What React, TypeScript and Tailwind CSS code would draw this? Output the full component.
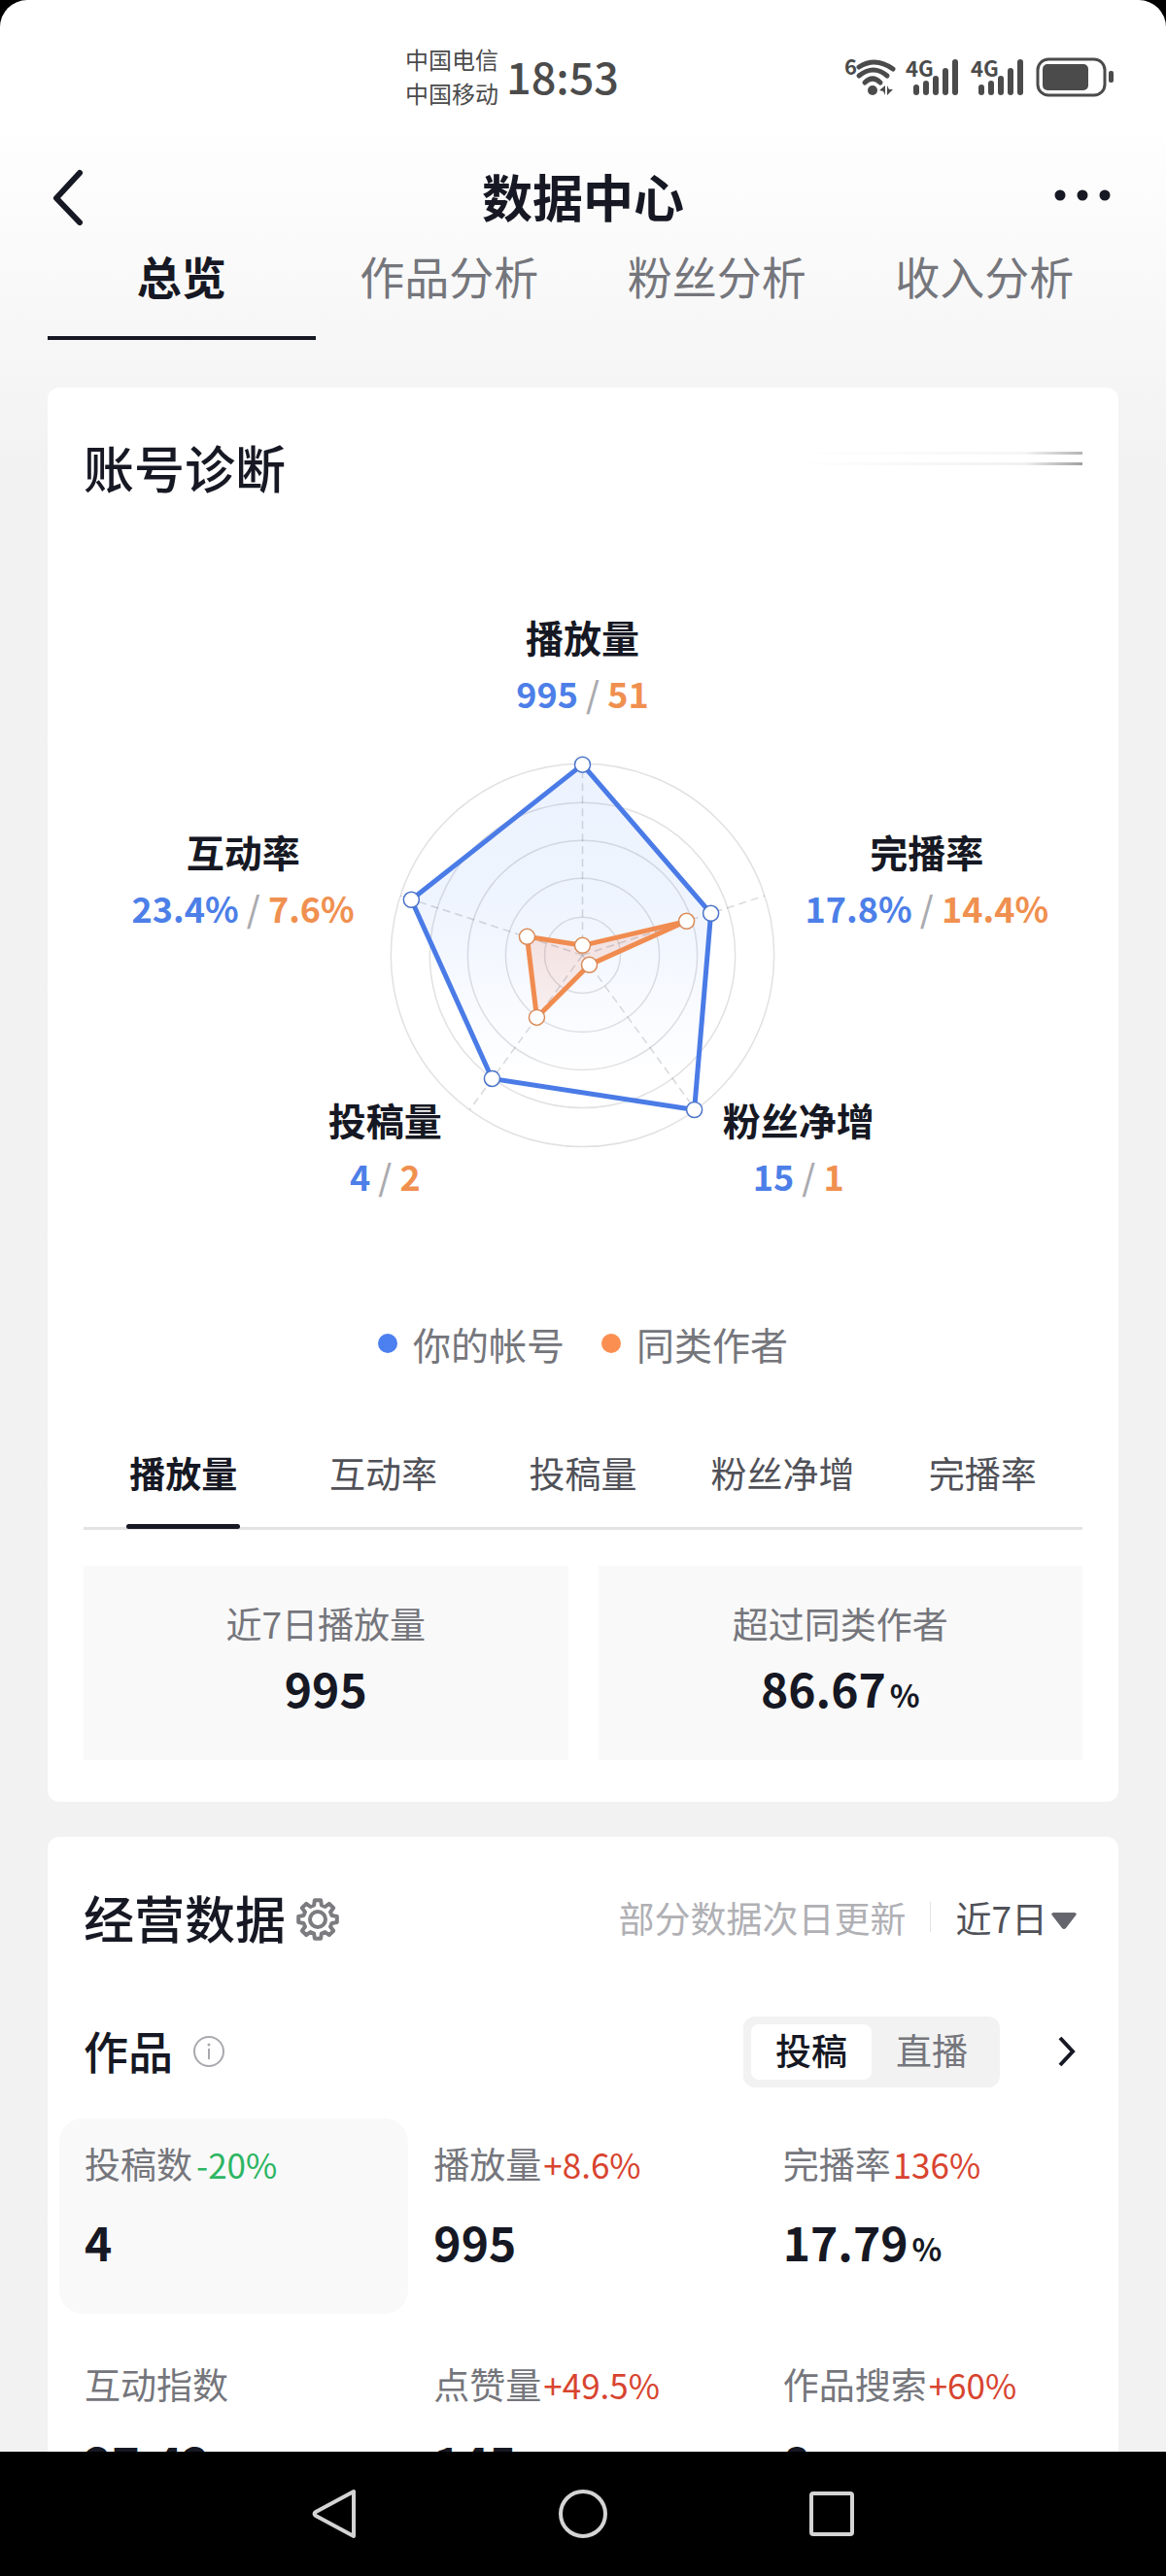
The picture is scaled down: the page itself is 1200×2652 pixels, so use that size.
import { useState } from "react";

const overviewTabs = ["总览", "作品分析", "粉丝分析", "收入分析"];
const metricTabs = ["播放量", "互动率", "投稿量", "粉丝净增", "完播率"];

interface Metric {
  label: string;
  change?: string;
  down?: boolean;
  value: string;
  unit?: string;
}

const metrics: Metric[] = [
  { label: "投稿数", change: "-20%", down: true, value: "4" },
  { label: "播放量", change: "+8.6%", value: "995" },
  { label: "完播率", change: "136%", value: "17.79", unit: "%" },
  { label: "互动指数", value: "27.42" },
  { label: "点赞量", change: "+49.5%", value: "145" },
  { label: "作品搜索", change: "+60%", value: "8" },
];

const radarLabels = [
  { x: 600, y: 672, name: "播放量", mine: "995", peer: "51" },
  { x: 954, y: 893, name: "完播率", mine: "17.8%", peer: "14.4%" },
  { x: 822, y: 1168, name: "粉丝净增", mine: "15", peer: "1" },
  { x: 397, y: 1168, name: "投稿量", mine: "4", peer: "2" },
  { x: 251, y: 893, name: "互动率", mine: "23.4%", peer: "7.6%" },
];

const rings = [39, 79, 118, 157, 197];
const axes = [
  [600, 786],
  [787, 922],
  [716, 1142],
  [484, 1142],
  [413, 922],
];
const minePoints = [
  [600, 787],
  [732, 940],
  [715, 1142],
  [507, 1110],
  [424, 926],
];
const peerPoints = [
  [600, 973],
  [707, 948],
  [607, 993],
  [553, 1047],
  [543, 964],
];

// eight teeth, each made of two outer and two inner corners
const gearPoints = Array.from({ length: 8 }, (_, i) => i * 45).flatMap((a) =>
  [
    [a - 9, 20],
    [a + 9, 20],
    [a + 15, 15],
    [a + 30, 15],
  ].map(([deg, r]) => {
    const t = (deg * Math.PI) / 180;
    return [Math.round((23 + r * Math.sin(t)) * 10) / 10, Math.round((23 - r * Math.cos(t)) * 10) / 10];
  })
);

function StatusBar() {
  return (
    <div className="grid h-[156px] grid-cols-[1fr_auto_1fr] items-center text-[#4b4b4b]">
      <div />
      <div className="flex items-center gap-2 pr-[146px]">
        <div className="text-[24px] leading-[35px]">
          <div>中国电信</div>
          <div>中国移动</div>
        </div>
        <div className="text-[45px] leading-[48px] font-medium">18:53</div>
      </div>
      <div className="flex items-center justify-end pr-[54px]">
        <svg width="278" height="60" viewBox="868 48 278 60" fill="currentColor">
          <text x="869" y="77" fontSize="22" fontWeight="700">6</text>
          <g fill="none" stroke="currentColor" strokeWidth="5" strokeLinecap="round">
            <path d="M884 69 Q901 58 919 71" />
            <path d="M884 78 Q899 66 913 78" />
            <path d="M890 85 Q898 77 906 85" />
          </g>
          <circle cx="898" cy="93" r="5" />
          <path d="M905 93l6-5v10l-2-4zM913 88v10l6-6h-4z" />
          <Signal x={0} />
          <Signal x={67} />
          <rect x="1068" y="61" width="69" height="37" rx="11" fill="none" stroke="currentColor" strokeWidth="3" />
          <rect x="1073" y="66" width="47" height="27" rx="5" />
          <rect x="1141" y="73" width="5" height="12" rx="2" />
        </svg>
      </div>
    </div>
  );
}

function Signal({ x }: { x: number }) {
  return (
    <g transform={`translate(${x} 0)`}>
      <text x="932" y="79" fontSize="22" fontWeight="700">4G</text>
      <rect x="940" y="87" width="6" height="11" rx="3" />
      <rect x="950" y="83" width="6" height="15" rx="3" />
      <rect x="960" y="78" width="6" height="20" rx="3" />
      <rect x="970" y="70" width="6" height="28" rx="3" />
      <rect x="980" y="61" width="6" height="37" rx="3" />
    </g>
  );
}

function Radar() {
  return (
    <svg viewBox="87 620 1027 640" className="w-full" role="img" aria-label="账号诊断">
      <defs>
        <linearGradient id="mine" x1="0" y1="0" x2="0" y2="1">
          <stop offset="0" stopColor="#4a86f5" stopOpacity="0.1" />
          <stop offset="0.4" stopColor="#4a86f5" stopOpacity="0.09" />
          <stop offset="0.9" stopColor="#4a86f5" stopOpacity="0" />
        </linearGradient>
        <linearGradient id="peer" x1="0" y1="0" x2="0" y2="1">
          <stop offset="0" stopColor="#f5734a" stopOpacity="0.18" />
          <stop offset="1" stopColor="#f5734a" stopOpacity="0.08" />
        </linearGradient>
      </defs>
      <polygon points={minePoints.join(" ")} fill="url(#mine)" />
      <polygon points={peerPoints.join(" ")} fill="url(#peer)" />
      {rings.map((r) => (
        <circle key={r} cx="600" cy="983" r={r} fill="none" stroke="#161823" strokeOpacity="0.13" strokeWidth="1.5" />
      ))}
      {axes.map(([x, y]) => (
        <line key={x} x1="600" y1="983" x2={x} y2={y} stroke="#161823" strokeOpacity="0.16" strokeWidth="1.5" strokeDasharray="8 5" />
      ))}
      <polygon points={minePoints.join(" ")} fill="none" stroke="#4a7be6" strokeWidth="5" strokeLinejoin="round" />
      {minePoints.map(([x, y]) => (
        <circle key={x} cx={x} cy={y} r="8" fill="#fff" stroke="#4a74c8" strokeWidth="1.5" />
      ))}
      <polygon points={peerPoints.join(" ")} fill="none" stroke="#f08c50" strokeWidth="5" strokeLinejoin="round" />
      {peerPoints.map(([x, y]) => (
        <circle key={x} cx={x} cy={y} r="8" fill="#fff" stroke="#d98a58" strokeWidth="1.5" />
      ))}
      {radarLabels.map((l) => (
        <g key={l.name} textAnchor="middle">
          <text x={l.x} y={l.y} fontSize="39" fontWeight="700" fill="#161823">{l.name}</text>
          <text x={l.x} y={l.y + 57} fontSize="36" fontWeight="700">
            <tspan fill="#4d7fe8">{l.mine}</tspan>
            <tspan fill="#aaaaaf" fontWeight="500"> / </tspan>
            <tspan fill="#f09050">{l.peer}</tspan>
          </text>
        </g>
      ))}
    </svg>
  );
}

function Diagnosis() {
  const [tab, setTab] = useState("播放量");
  return (
    <section className="rounded-xl bg-white px-[37px] pt-[48px] pb-[43px]">
      <div className="flex items-center justify-between">
        <h2 className="text-[52px] leading-[68px] font-medium">账号诊断</h2>
        <div className="flex w-[295px] flex-col gap-2 pb-[18px]">
          <div className="h-[3px] bg-linear-to-r from-white via-[#f6f6f6] via-80% to-[#b4b4b4]" />
          <div className="h-[3px] bg-linear-to-r from-white via-[#f1f1f1] via-80% to-[#a0a0a0]" />
        </div>
      </div>
      <div className="pt-[105px]">
        <Radar />
      </div>
      <div className="flex justify-center gap-[38px] pt-[96px] text-[39px] leading-[52px] text-[#75767c]">
        <span className="flex items-center gap-4">
          <i className="size-5 rounded-full bg-[#4c7ff0]" />
          你的帐号
        </span>
        <span className="flex items-center gap-4">
          <i className="size-5 rounded-full bg-[#fb8f52]" />
          同类作者
        </span>
      </div>
      <div className="mt-[65px] grid grid-cols-5 border-b-3 border-[#e3e3e4]">
        {metricTabs.map((t) => (
          <button
            key={t}
            type="button"
            onClick={() => setTab(t)}
            className={
              t === tab
                ? "flex flex-col items-center text-[37px] leading-[84px] font-bold"
                : "flex flex-col items-center text-[37px] leading-[84px] text-[#505158]"
            }
          >
            {t}
            <span className={t === tab ? "mt-[11px] -mb-[2px] h-[5px] w-[117px] rounded-sm bg-[#161823]" : "mt-[9px] h-[5px]"} />
          </button>
        ))}
      </div>
      <div className="mt-[37px] grid grid-cols-2 gap-[31px] text-center">
        <div className="bg-[#f9f9f9] pt-[33px] pb-[39px]">
          <div className="text-[37px] leading-[52px] text-[#75767c]">近7日播放量</div>
          <div className="pt-1 text-[48px] leading-[72px] font-bold">995</div>
        </div>
        <div className="bg-[#f9f9f9] pt-[33px] pb-[39px]">
          <div className="text-[37px] leading-[52px] text-[#75767c]">超过同类作者</div>
          <div className="pt-1 text-[48px] leading-[72px] font-bold">
            86.67<span className="pl-1 text-[32px] leading-none">%</span>
          </div>
        </div>
      </div>
    </section>
  );
}

function MetricCell({ metric, active }: { metric: Metric; active: boolean }) {
  return (
    <div className={active ? "h-[201px] rounded-3xl bg-[#f9f9f9] px-[26px] pt-5" : "h-[201px] px-[26px] pt-5"}>
      <div className="text-[37px] leading-[52px] whitespace-nowrap text-[#75767c]">
        {metric.label}
        <span className={metric.down ? "pl-1 text-[35px] leading-none text-[#2db563]" : "pl-[2px] text-[35px] leading-none text-[#d8442f]"}>
          {metric.change}
        </span>
      </div>
      <div className="pt-[18px] text-[48px] leading-[72px] font-bold">
        {metric.value}
        {metric.unit && <span className="pl-1 text-[32px] leading-none">{metric.unit}</span>}
      </div>
    </div>
  );
}

function Business() {
  const [kind, setKind] = useState("投稿");
  return (
    <section className="rounded-xl bg-white pt-[49px]">
      <div className="flex items-center justify-between px-[37px]">
        <div className="flex items-center gap-[10px]">
          <h2 className="text-[52px] leading-[68px] font-medium">经营数据</h2>
          <button type="button" aria-label="设置" className="pt-1">
            <svg width="46" height="46" viewBox="0 0 46 46" fill="none" stroke="#7c7c80" strokeWidth="4" strokeLinejoin="round">
              <polygon points={gearPoints.join(" ")} />
              <circle cx="23" cy="23" r="8" />
            </svg>
          </button>
        </div>
        <div className="flex items-center text-[37px] leading-[52px]">
          <span className="text-[#b0b0b5]">部分数据次日更新</span>
          <span className="mx-[25px] h-[31px] w-px bg-[#e3e3e4]" />
          <button type="button" className="flex items-center gap-1 pr-[6px] text-[#505158]">
            近7日
            <svg width="26" height="26" viewBox="0 -8 26 26" fill="#65666d">
              <path d="M2 0h22q3 1 1 3L15 16q-2 2-4 0L1 3q-2-2 1-3z" />
            </svg>
          </button>
        </div>
      </div>
      <div className="flex items-center pt-[68px] pr-[42px] pl-[37px]">
        <h3 className="pb-1 text-[46px] leading-[69px] font-medium">作品</h3>
        <button type="button" aria-label="说明" className="ml-5">
          <svg width="34" height="34" viewBox="0 0 34 34" fill="none" stroke="#a9a9ae" strokeWidth="2">
            <circle cx="17" cy="17" r="15" />
            <path d="M17 14v11" />
            <circle cx="17" cy="10" r="1.5" fill="#a9a9ae" stroke="none" />
          </svg>
        </button>
        <div className="ml-auto flex h-[73px] rounded-xl bg-[#f2f2f2] p-2 text-[37px] leading-[49px]">
          {["投稿", "直播"].map((k) => (
            <button
              key={k}
              type="button"
              onClick={() => setKind(k)}
              className={
                k === kind
                  ? "w-[124px] rounded-lg bg-white pb-1 font-medium"
                  : "w-[124px] rounded-lg pb-1 text-[#75767c]"
              }
            >
              {k}
            </button>
          ))}
        </div>
        <button type="button" aria-label="更多" className="ml-[58px]">
          <svg width="22" height="34" viewBox="0 0 22 34" fill="none" stroke="#161823" strokeWidth="4">
            <path d="M4 3l13 14L4 31" />
          </svg>
        </button>
      </div>
      <div className="grid grid-cols-3 gap-y-[26px] px-3 pt-8">
        {metrics.map((m, i) => (
          <MetricCell key={m.label} metric={m} active={i === 0} />
        ))}
      </div>
    </section>
  );
}

export default function App() {
  const [tab, setTab] = useState("总览");
  return (
    <div className="h-screen bg-black font-['Noto_Sans_CJK_SC',sans-serif] text-[#161823]">
      <div className="flex h-full flex-col">
        <div className="min-h-0 flex-1 overflow-hidden rounded-t-[28px] bg-[#f2f2f2] bg-linear-to-b from-white from-[120px] to-[#f2f2f2] to-[480px]">
          <StatusBar />
          <header className="flex h-[92px] items-center justify-between pr-[57px] pl-[51px]">
            <button type="button" aria-label="返回" className="w-[66px]">
              <svg width="36" height="60" viewBox="0 0 36 60" fill="none" stroke="#161823" strokeWidth="6" strokeLinecap="round" strokeLinejoin="round">
                <path d="M31 6L7 32l24 25" />
              </svg>
            </button>
            <h1 className="text-[52px] leading-[68px] font-bold">数据中心</h1>
            <button type="button" aria-label="更多" className="w-[60px]">
              <svg width="60" height="14" viewBox="0 0 60 14" fill="#161823">
                <circle cx="8" cy="6" r="5.5" />
                <circle cx="31" cy="6" r="5.5" />
                <circle cx="54" cy="6" r="5.5" />
              </svg>
            </button>
          </header>
          <nav className="mx-[49px] grid grid-cols-4 text-[46px]">
            {overviewTabs.map((t) => (
              <button
                key={t}
                type="button"
                onClick={() => setTab(t)}
                className={
                  t === tab
                    ? "border-b-4 border-[#161823] pb-7 leading-[70px] font-bold"
                    : "border-b-4 border-transparent pb-7 leading-[70px] text-[#75767c]"
                }
              >
                {t}
              </button>
            ))}
          </nav>
          <main className="mx-[49px] flex flex-col gap-9 pt-[49px]">
            <Diagnosis />
            <Business />
          </main>
        </div>
        <div className="flex h-32 shrink-0 items-center justify-center gap-[204px] bg-black">
          <button type="button" aria-label="返回">
            <svg width="52" height="56" viewBox="0 0 52 56" fill="none" stroke="#d4d4d4" strokeWidth="4" strokeLinejoin="round">
              <path d="M46 5v46L7 30q-3-2 0-4z" />
            </svg>
          </button>
          <button type="button" aria-label="主页">
            <svg width="52" height="56" viewBox="0 0 52 56" fill="none" stroke="#d4d4d4" strokeWidth="4">
              <circle cx="26" cy="28" r="23" />
            </svg>
          </button>
          <button type="button" aria-label="最近任务">
            <svg width="52" height="56" viewBox="0 0 52 56" fill="none" stroke="#d4d4d4" strokeWidth="4">
              <rect x="5" y="7" width="42" height="42" rx="2" />
            </svg>
          </button>
        </div>
      </div>
    </div>
  );
}
